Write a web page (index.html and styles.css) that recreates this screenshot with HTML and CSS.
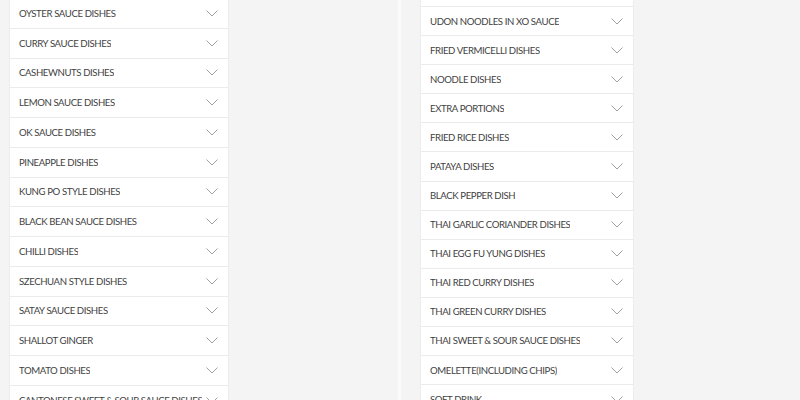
FILE: index.html
```html
<!DOCTYPE html>
<html>
<head>
<meta charset="utf-8">
<link rel="stylesheet" href="styles.css">
</head>
<body>
<div class="page">
  <div class="panel panel-left">
    <ul class="menu menu-left">
      <li class="item"><span>OYSTER SAUCE DISHES</span><svg class="chev" viewBox="0 0 12 7"><polyline points="0.5,0.5 6,6 11.5,0.5"/></svg></li>
      <li class="item"><span>CURRY SAUCE DISHES</span><svg class="chev" viewBox="0 0 12 7"><polyline points="0.5,0.5 6,6 11.5,0.5"/></svg></li>
      <li class="item"><span>CASHEWNUTS DISHES</span><svg class="chev" viewBox="0 0 12 7"><polyline points="0.5,0.5 6,6 11.5,0.5"/></svg></li>
      <li class="item"><span>LEMON SAUCE DISHES</span><svg class="chev" viewBox="0 0 12 7"><polyline points="0.5,0.5 6,6 11.5,0.5"/></svg></li>
      <li class="item"><span>OK SAUCE DISHES</span><svg class="chev" viewBox="0 0 12 7"><polyline points="0.5,0.5 6,6 11.5,0.5"/></svg></li>
      <li class="item"><span>PINEAPPLE DISHES</span><svg class="chev" viewBox="0 0 12 7"><polyline points="0.5,0.5 6,6 11.5,0.5"/></svg></li>
      <li class="item"><span>KUNG PO STYLE DISHES</span><svg class="chev" viewBox="0 0 12 7"><polyline points="0.5,0.5 6,6 11.5,0.5"/></svg></li>
      <li class="item"><span>BLACK BEAN SAUCE DISHES</span><svg class="chev" viewBox="0 0 12 7"><polyline points="0.5,0.5 6,6 11.5,0.5"/></svg></li>
      <li class="item"><span>CHILLI DISHES</span><svg class="chev" viewBox="0 0 12 7"><polyline points="0.5,0.5 6,6 11.5,0.5"/></svg></li>
      <li class="item"><span>SZECHUAN STYLE DISHES</span><svg class="chev" viewBox="0 0 12 7"><polyline points="0.5,0.5 6,6 11.5,0.5"/></svg></li>
      <li class="item"><span>SATAY SAUCE DISHES</span><svg class="chev" viewBox="0 0 12 7"><polyline points="0.5,0.5 6,6 11.5,0.5"/></svg></li>
      <li class="item"><span>SHALLOT GINGER</span><svg class="chev" viewBox="0 0 12 7"><polyline points="0.5,0.5 6,6 11.5,0.5"/></svg></li>
      <li class="item"><span>TOMATO DISHES</span><svg class="chev" viewBox="0 0 12 7"><polyline points="0.5,0.5 6,6 11.5,0.5"/></svg></li>
      <li class="item"><span>CANTONESE SWEET &amp; SOUR SAUCE DISHES</span><svg class="chev" viewBox="0 0 12 7"><polyline points="0.5,0.5 6,6 11.5,0.5"/></svg></li>
    </ul>
  </div>
  <div class="divider"></div>
  <div class="panel panel-right">
    <ul class="menu menu-right">
      <li class="item"><span>UDON NOODLES</span><svg class="chev" viewBox="0 0 12 7"><polyline points="0.5,0.5 6,6 11.5,0.5"/></svg></li>
      <li class="item"><span>UDON NOODLES IN XO SAUCE</span><svg class="chev" viewBox="0 0 12 7"><polyline points="0.5,0.5 6,6 11.5,0.5"/></svg></li>
      <li class="item"><span>FRIED VERMICELLI DISHES</span><svg class="chev" viewBox="0 0 12 7"><polyline points="0.5,0.5 6,6 11.5,0.5"/></svg></li>
      <li class="item"><span>NOODLE DISHES</span><svg class="chev" viewBox="0 0 12 7"><polyline points="0.5,0.5 6,6 11.5,0.5"/></svg></li>
      <li class="item"><span>EXTRA PORTIONS</span><svg class="chev" viewBox="0 0 12 7"><polyline points="0.5,0.5 6,6 11.5,0.5"/></svg></li>
      <li class="item"><span>FRIED RICE DISHES</span><svg class="chev" viewBox="0 0 12 7"><polyline points="0.5,0.5 6,6 11.5,0.5"/></svg></li>
      <li class="item"><span>PATAYA DISHES</span><svg class="chev" viewBox="0 0 12 7"><polyline points="0.5,0.5 6,6 11.5,0.5"/></svg></li>
      <li class="item"><span>BLACK PEPPER DISH</span><svg class="chev" viewBox="0 0 12 7"><polyline points="0.5,0.5 6,6 11.5,0.5"/></svg></li>
      <li class="item"><span>THAI GARLIC CORIANDER DISHES</span><svg class="chev" viewBox="0 0 12 7"><polyline points="0.5,0.5 6,6 11.5,0.5"/></svg></li>
      <li class="item"><span>THAI EGG FU YUNG DISHES</span><svg class="chev" viewBox="0 0 12 7"><polyline points="0.5,0.5 6,6 11.5,0.5"/></svg></li>
      <li class="item"><span>THAI RED CURRY DISHES</span><svg class="chev" viewBox="0 0 12 7"><polyline points="0.5,0.5 6,6 11.5,0.5"/></svg></li>
      <li class="item"><span>THAI GREEN CURRY DISHES</span><svg class="chev" viewBox="0 0 12 7"><polyline points="0.5,0.5 6,6 11.5,0.5"/></svg></li>
      <li class="item"><span>THAI SWEET &amp; SOUR SAUCE DISHES</span><svg class="chev" viewBox="0 0 12 7"><polyline points="0.5,0.5 6,6 11.5,0.5"/></svg></li>
      <li class="item"><span>OMELETTE(INCLUDING CHIPS)</span><svg class="chev" viewBox="0 0 12 7"><polyline points="0.5,0.5 6,6 11.5,0.5"/></svg></li>
      <li class="item"><span>SOFT DRINK</span><svg class="chev" viewBox="0 0 12 7"><polyline points="0.5,0.5 6,6 11.5,0.5"/></svg></li>
    </ul>
  </div>
</div>
</body>
</html>
```
FILE: styles.css
```css
html, body {
  margin: 0;
  padding: 0;
  background: #f4f4f4;
  height: 400px;
  overflow: hidden;
}
.page {
  display: flex;
  height: 400px;
  font-family: Lato, "Open Sans", sans-serif;
}
.panel {
  flex: none;
}
.panel-left {
  width: 398px;
  padding-left: 10px;
  box-sizing: border-box;
}
.panel-right {
  padding-left: 20px;
}
.divider {
  width: 3px;
  flex: none;
  background: #fbfbfb;
}
.menu {
  list-style: none;
  margin: 0;
  padding: 0;
  box-shadow: 1px 0 0 #ececec, -1px 0 0 #ececec;
}
.menu-left {
  width: 218px;
  margin-top: -1px;
}
.menu-right {
  width: 212px;
  margin-top: -22px;
}
.item {
  display: flex;
  align-items: center;
  justify-content: space-between;
  background: #fff;
  border-bottom: 1px solid #ebebeb;
  box-sizing: border-box;
  padding: 0 10px 0 9px;
  font-size: 9.6px;
  letter-spacing: -0.4px;
  color: #3f3f3f;
  white-space: nowrap;
}
.menu-left .item {
  height: 29.75px;
}
.menu-right .item {
  height: 29.08px;
}
.item span {
  overflow: hidden;
}
.chev {
  width: 12px;
  height: 7px;
  flex: none;
  margin-left: 2px;
}
.chev polyline {
  fill: none;
  stroke: #a0a0a0;
  stroke-width: 1;
}
```
